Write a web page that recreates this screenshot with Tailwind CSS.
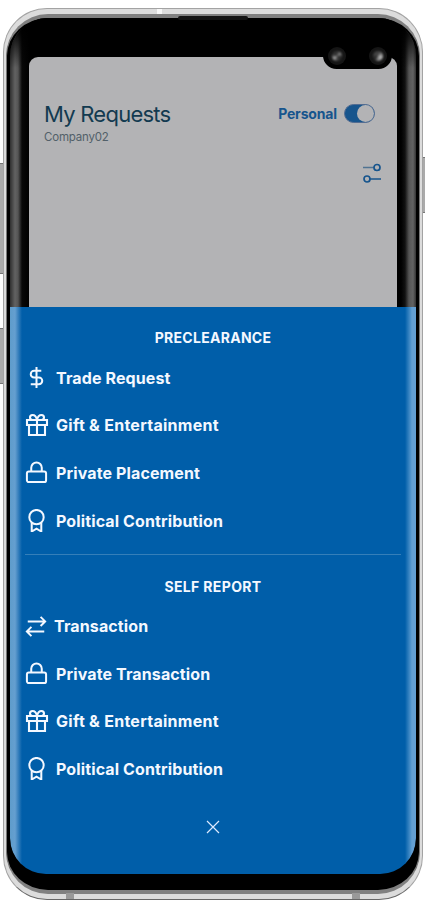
<!DOCTYPE html>
<html lang="en">
<head>
<meta charset="utf-8">
<title>My Requests</title>
<script src="https://cdn.jsdelivr.net/npm/@tailwindcss/browser@4"></script>
</head>
<body class="bg-white font-['Inter',sans-serif]">
<svg class="hidden">
  <symbol id="dollar" viewBox="0 0 24 24"><path d="M12 1v22M17 5H9.500a3.500 3.500 0 0 0 0 7h5a3.500 3.500 0 0 1 0 7H6"/></symbol>
  <symbol id="gift" viewBox="0 0 24 24"><path d="M20 12v10H4V12M2 7h20v5H2zM12 22V7M12 7H7.500a2.500 2.500 0 0 1 0-5C11 2 12 7 12 7zM12 7h4.500a2.500 2.500 0 0 0 0-5C13 2 12 7 12 7z"/></symbol>
  <symbol id="lock" viewBox="0 0 24 24"><rect x="2" y="11" width="20" height="11" rx="2"/><path d="M6.500 11V7a5.500 5.500 0 0 1 11 0v4"/></symbol>
  <symbol id="award" viewBox="0 0 24 24"><circle cx="12" cy="8.500" r="7.500"/><path d="M7 14.500v9l5-3 5 3v-9"/></symbol>
  <symbol id="transfer" viewBox="0 0 24 24"><path d="M3 7h19M17 2l5 5-5 5M21 18H2M7 13l-5 5 5 5"/></symbol>
</svg>
<div class="relative h-[900px] w-[425px] overflow-hidden">
  <!-- side buttons -->
  <div class="absolute -left-px top-[163px] h-[111px] w-[6px] border border-[#777] bg-[#aaa]"></div>
  <div class="absolute -left-px top-[328px] h-[56px] w-[6px] border border-[#777] bg-[#aaa]"></div>
  <div class="absolute left-[421px] top-[157px] h-[56px] w-[6px] border border-[#777] bg-[#aaa]"></div>

  <!-- metal frame -->
  <div class="absolute left-[3px] top-[8px] h-[892px] w-[420px] rounded-[44px] border border-[#a3a3a3] border-b-[#666] bg-[#dcdcdc] px-[2px] pt-[5px] pb-[5px]">
    <div class="h-full rounded-[42px] border-x border-y-[4px] border-x-[#777] border-y-[#808080] bg-black px-[3px]">
      <div class="flex h-[857px] flex-col overflow-hidden rounded-t-[38px] rounded-b-[36px]">
        <!-- dimmed page with curved glass edges -->
        <div class="h-[289px] bg-black">
          <div class="h-full bg-[linear-gradient(180deg,#000_0px,#000_10px,transparent_50px),linear-gradient(90deg,#303030_0px,#626262_5px,#555_8px,#080808_12px,#000_19px,#000_391px,#111_395px,#555_399px,#626262_403px,#333_406px)] pl-[19px] pt-[39px]">
            <div class="h-[250px] w-[368px] rounded-t-[9px] bg-[#b3b3b5] px-[15px]">
              <div class="flex justify-between pt-[42px]">
                <div>
                  <h1 class="h-[30px] text-[22px] leading-[30px] tracking-[-0.750px] text-[#123a50] whitespace-nowrap">My Requests</h1>
                  <p class="text-[11.500px] leading-[16px] tracking-[-0.200px] text-[#526069]">Company02</p>
                </div>
                <div class="mr-[7px] flex h-[28px] items-center gap-[7px] text-[14px] font-bold text-[#17558d]">
                  <span class="tracking-[-0.150px]">Personal</span>
                  <span class="flex h-[19px] w-[31px] justify-end rounded-full border border-[#536c91] bg-[#17558d]"><i class="size-[17px] rounded-full bg-[#b3b3b5]"></i></span>
                </div>
              </div>
              <div class="flex justify-end pt-[18px]">
                <svg class="size-[20px]" viewBox="0 0 20 20" fill="none" stroke="#17558d" stroke-width="1.700"><path d="M1 4.500h11" stroke="#507392"/><circle cx="15" cy="4.500" r="3"/><path d="M8 16h11"/><circle cx="5" cy="16" r="3"/></svg>
              </div>
            </div>
          </div>
        </div>

        <!-- action sheet -->
        <div class="flex h-[567px] flex-col overflow-hidden rounded-b-[36px] bg-[linear-gradient(90deg,#5e9ccb_0px,#659fd0_5px,#3b82be_8px,#005ea9_12px,#005ea9_395px,#297abb_398px,#639fd3_402px,#639fd3_406px)] px-[15px] pt-[20px] text-[16px] font-bold tracking-[0.120px] text-[#f4f8ff]">
          <h2 class="text-center text-[14px] leading-[22px] tracking-[0.280px]">PRECLEARANCE</h2>
          <ul class="mt-[5px]">
            <li class="flex h-[47.600px] items-center gap-[8px]"><svg class="size-[23px] fill-none stroke-current stroke-[2.100]"><use href="#dollar"/></svg><span>Trade Request</span></li>
            <li class="flex h-[47.600px] items-center gap-[7px]"><svg class="size-[24px] fill-none stroke-current stroke-[2.100]"><use href="#gift"/></svg><span class="tracking-[0.270px]">Gift &amp; Entertainment</span></li>
            <li class="flex h-[47.600px] items-center gap-[8px]"><svg class="size-[23px] fill-none stroke-current stroke-[2.100]"><use href="#lock"/></svg><span>Private Placement</span></li>
            <li class="flex h-[47.600px] items-center gap-[8px]"><svg class="size-[23px] fill-none stroke-current stroke-[2.100]"><use href="#award"/></svg><span>Political Contribution</span></li>
          </ul>
          <hr class="mt-[10px] border-[#357fb9]">
          <h2 class="mt-[21px] text-center text-[14px] leading-[22px] tracking-[0.350px]">SELF REPORT</h2>
          <ul class="mt-[4px]">
            <li class="flex h-[47.600px] items-center gap-[7px]"><svg class="size-[22px] fill-none stroke-current stroke-[2.100]"><use href="#transfer"/></svg><span>Transaction</span></li>
            <li class="flex h-[47.600px] items-center gap-[8px]"><svg class="size-[23px] fill-none stroke-current stroke-[2.100]"><use href="#lock"/></svg><span>Private Transaction</span></li>
            <li class="flex h-[47.600px] items-center gap-[7px]"><svg class="size-[24px] fill-none stroke-current stroke-[2.100]"><use href="#gift"/></svg><span class="tracking-[0.270px]">Gift &amp; Entertainment</span></li>
            <li class="flex h-[47.600px] items-center gap-[8px]"><svg class="size-[23px] fill-none stroke-current stroke-[2.100]"><use href="#award"/></svg><span>Political Contribution</span></li>
          </ul>
          <svg class="mx-auto mt-[27px] size-[14px]" viewBox="0 0 14 14" fill="none" stroke="#dceaff" stroke-width="1.200"><path d="M1 1l12 12M13 1L1 13"/></svg>
        </div>
      </div>
    </div>
  </div>

  <!-- earpiece, antenna seams -->
  <div class="absolute left-[178px] top-[16px] h-[4px] w-[70px] rounded-full bg-[#151515]"></div>
  <div class="absolute left-[157px] top-[9px] h-[5px] w-[5px] bg-[#f8f8f8]"></div>
  <div class="absolute left-[66px] top-[893px] h-[6px] w-[8px] bg-[#999]"></div>
  <div class="absolute left-[352px] top-[893px] h-[6px] w-[8px] bg-[#999]"></div>

  <!-- cameras -->
  <div class="absolute left-[323px] top-[42px] flex h-[27px] w-[69px] items-center justify-between rounded-full bg-black px-[5px]">
    <span class="flex size-[18px] items-center justify-center rounded-full bg-[#151515]"><i class="size-[10px] rounded-full bg-[conic-gradient(#222,#888_15%,#222_30%,#444_50%,#aaa_65%,#333_80%)] blur-[1px]"></i></span>
    <span class="flex size-[18px] items-center justify-center rounded-full bg-[#151515]"><i class="size-[10px] rounded-full bg-[conic-gradient(#333,#777_15%,#bbb_30%,#888_50%,#222_65%,#444_80%)] blur-[1px]"></i></span>
  </div>
</div>
</body>
</html>
